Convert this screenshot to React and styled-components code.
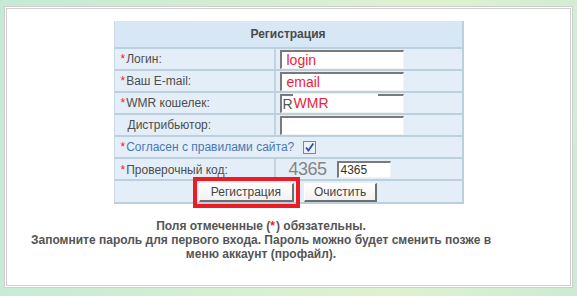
import React from 'react'
import styled, { createGlobalStyle } from 'styled-components'

const Global = createGlobalStyle`
  html, body {
    margin: 0;
    padding: 0;
  }
  body {
    width: 577px;
    height: 296px;
    overflow: hidden;
    background: linear-gradient(100deg, #c4ead6 0%, #d6efd2 45%, #dff2cf 70%, #cdebd3 100%);
    font-family: "Liberation Sans", Arial, sans-serif;
  }
`

const Panel = styled.div`
  box-sizing: border-box;
  margin: 6px 4px 0 4px;
  width: 569px;
  height: 282px;
  background: #fff;
  border: 3px double #cfcfcf;
  padding-top: 12px;
`

const Table = styled.div`
  box-sizing: border-box;
  width: 350px;
  margin: 0 auto;
  border-left: 1px solid #c9d8e4;
  border-right: 2px solid #bccfdc;
  border-bottom: 2px solid #bccfdc;
`

const Header = styled.div`
  height: 26px;
  background: #d8e7f5;
  display: flex;
  align-items: center;
  justify-content: center;
  font-size: 12px;
  font-weight: bold;
  color: #4a4a4a;
`

const Row = styled.div`
  display: grid;
  grid-template-columns: ${({ $span }) => ($span ? '1fr' : '159px 2px 1fr')};
  height: ${({ $h }) => $h || 20}px;
  border-top: 2px solid #bccfdc;
  background: #e4eef8;
`

const Sep = styled.div`
  background: #c3d3df;
`

const Label = styled.div`
  display: flex;
  align-items: center;
  padding-left: ${({ $req }) => ($req ? 6 : 13)}px;
  font-size: 12px;
  color: ${({ $blue }) => ($blue ? '#4a78b0' : '#4d4d4d')};
  white-space: nowrap;
`

const Star = styled.span`
  color: #ee1c2e;
  margin-right: 1px;
`

const Cell = styled.div`
  display: flex;
  align-items: ${({ $center }) => ($center ? 'center' : 'flex-start')};
  padding-left: ${({ $pl }) => $pl ?? 4}px;
`

const TextBox = styled.div`
  box-sizing: border-box;
  position: relative;
  width: ${({ $w }) => $w || 124}px;
  height: ${({ $h }) => $h || 19}px;
  margin-top: ${({ $mt }) => $mt ?? 1}px;
  background: #fff;
  border-top: 2px solid #7a7a7a;
  border-left: 2px solid #7a7a7a;
  border-right: 1px solid #f2f2f2;
  border-bottom: 1px solid #f2f2f2;
  display: flex;
  align-items: center;
  padding-left: ${({ $pl }) => $pl ?? 5}px;
  font-size: ${({ $fs }) => $fs || 14}px;
  color: ${({ $dark }) => ($dark ? '#333' : '#ee1c3a')};
  white-space: nowrap;
`

const Prefix = styled.span`
  color: #555;
  font-size: 14px;
`

const Overlay = styled.span`
  position: absolute;
  left: 11px;
  top: -2px;
  height: 18px;
  width: 84px;
  background: #fff;
  display: flex;
  align-items: center;
  padding-left: 1px;
  color: #ee1c3a;
  font-size: 14px;
`

const Check = styled.span`
  box-sizing: border-box;
  width: 13px;
  height: 13px;
  margin-left: 9px;
  border: 1px solid #7d8793;
  background: #eef1f5;
  display: inline-flex;
  align-items: center;
  justify-content: center;
`

const Captcha = styled.span`
  font-size: 18px;
  color: #858585;
  letter-spacing: -0.5px;
  width: 48px;
`

const Buttons = styled.div`
  display: flex;
  justify-content: center;
  align-items: flex-start;
  gap: 10px;
  padding-top: 2px;
`

const Button = styled.button`
  box-sizing: border-box;
  height: 19px;
  padding: 0 ${({ $px }) => $px || 10}px;
  font-family: "Liberation Sans", Arial, sans-serif;
  font-size: 12px;
  color: #444;
  background: linear-gradient(#ffffff, #f1f1f1);
  border-top: 1px solid #fff;
  border-left: 1px solid #fff;
  border-right: 2px solid #6f6f6f;
  border-bottom: 2px solid #6f6f6f;
  outline: ${({ $marked }) => ($marked ? '4px solid #ec1c24' : 'none')};
  outline-offset: 2px;
  cursor: pointer;
`

const Notes = styled.div`
  margin: 15px 64px 0 9px;
  text-align: center;
  font-size: 12px;
  font-weight: bold;
  line-height: 14px;
  color: #555;
`

const fields = [
  { label: 'Логин:', req: true, value: 'login' },
  { label: 'Ваш E-mail:', req: true, value: 'email' },
  { label: 'WMR кошелек:', req: true, wmr: true },
  { label: 'Дистрибьютор:', req: false, value: '' },
]

export default function App() {
  return (
    <>
      <Global />
      <Panel>
        <Table>
          <Header>Регистрация</Header>
          {fields.map((f) => (
            <Row key={f.label}>
              <Label $req={f.req}>
                {f.req && <Star>*</Star>}
                {f.label}
              </Label>
              <Sep />
              <Cell>
                {f.wmr ? (
                  <TextBox $pl={1}>
                    <Prefix>R</Prefix>
                    <Overlay>WMR</Overlay>
                  </TextBox>
                ) : (
                  <TextBox>{f.value}</TextBox>
                )}
              </Cell>
            </Row>
          ))}
          <Row $span>
            <Label $req $blue>
              <Star>*</Star>
              Согласен с правилами сайта?
              <Check>
                <svg width="11" height="11" viewBox="0 0 11 11">
                  <path d="M2 5.5 L4.4 8.5 L9.3 1.5" fill="none" stroke="#2a4fa8" strokeWidth="1.8" />
                </svg>
              </Check>
            </Label>
          </Row>
          <Row>
            <Label $req>
              <Star>*</Star>
              Проверочный код:
            </Label>
            <Sep />
            <Cell $center $pl={13}>
              <Captcha>4365</Captcha>
              <TextBox $w={54} $h={17} $mt={0} $fs={12} $pl={2} $dark>4365</TextBox>
            </Cell>
          </Row>
          <Row $span $h={21}>
            <Buttons>
              <Button $marked $px={11}>Регистрация</Button>
              <Button $px={9}>Очистить</Button>
            </Buttons>
          </Row>
        </Table>
        <Notes>
          Поля отмеченные (<Star>*</Star>) обязательны.
          <br />
          Запомните пароль для первого входа. Пароль можно будет сменить позже в меню аккаунт (профайл).
        </Notes>
      </Panel>
    </>
  )
}
